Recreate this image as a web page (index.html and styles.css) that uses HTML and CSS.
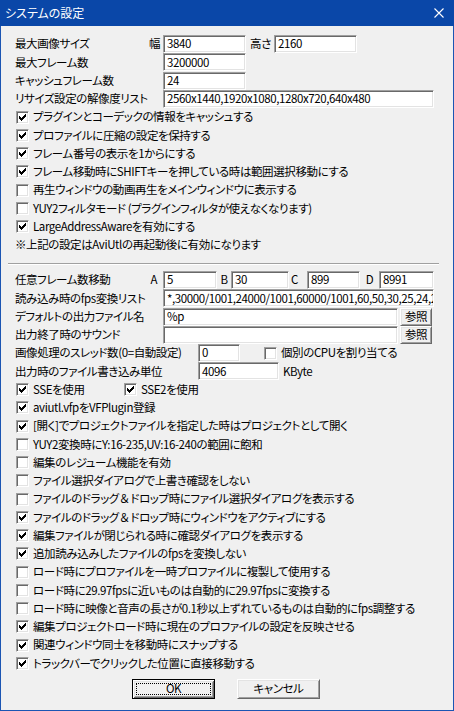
FILE: index.html
```html
<!DOCTYPE html>
<html lang="ja">
<head>
<meta charset="utf-8">
<title>システムの設定</title>
<link rel="stylesheet" href="styles.css">
</head>
<body>
<div class="window">
  <div class="titlebar">
    <span class="title">システムの設定</span>
    <span class="close"><svg width="10" height="10" viewBox="0 0 10 10"><path d="M0.5 0.5L9.5 9.5M9.5 0.5L0.5 9.5" stroke="#fff" stroke-width="1.1" fill="none"/></svg></span>
  </div>
  <div class="client">
    <div class="row"><span class="lbl">最大画像サイズ<span class="sub">幅</span></span><span class="edit w83">3840</span><span class="lbl2">高さ</span><span class="edit w83">2160</span></div>
    <div class="row"><span class="lbl">最大フレーム数</span><span class="edit w83">3200000</span></div>
    <div class="row"><span class="lbl">キャッシュフレーム数</span><span class="edit w83">24</span></div>
    <div class="row"><span class="lbl">リサイズ設定の解像度リスト</span><span class="edit wfull">2560x1440,1920x1080,1280x720,640x480</span></div>
    <div class="row cbrow"><span class="cb on"></span><span>プラグインとコーデックの情報をキャッシュする</span></div>
    <div class="row cbrow"><span class="cb on"></span><span>プロファイルに圧縮の設定を保持する</span></div>
    <div class="row cbrow"><span class="cb on"></span><span>フレーム番号の表示を1からにする</span></div>
    <div class="row cbrow"><span class="cb on"></span><span>フレーム移動時にSHIFTキーを押している時は範囲選択移動にする</span></div>
    <div class="row cbrow"><span class="cb"></span><span>再生ウィンドウの動画再生をメインウィンドウに表示する</span></div>
    <div class="row cbrow"><span class="cb"></span><span>YUY2フィルタモード (プラグインフィルタが使えなくなります)</span></div>
    <div class="row cbrow"><span class="cb on"></span><span>LargeAddressAwareを有効にする</span></div>
    <div class="row"><span>※上記の設定はAviUtlの再起動後に有効になります</span></div>

    <div class="sep"></div>

    <div class="row"><span class="lbl">任意フレーム数移動<span class="sub suba">A</span></span><span class="edit wa">5</span><span class="key keyb">B</span><span class="edit wb">30</span><span class="key keyc">C</span><span class="edit wc">899</span><span class="key keyd">D</span><span class="edit wd">8991</span></div>
    <div class="row"><span class="lbl">読み込み時のfps変換リスト</span><span class="edit wfull">*,30000/1001,24000/1001,60000/1001,60,50,30,25,24,20</span></div>
    <div class="row"><span class="lbl">デフォルトの出力ファイル名</span><span class="edit wpath">%p</span><span class="btn small">参照</span></div>
    <div class="row"><span class="lbl">出力終了時のサウンド</span><span class="edit wpath"></span><span class="btn small">参照</span></div>
    <div class="row"><span class="lbl wide">画像処理のスレッド数(0=自動設定)</span><span class="edit wthr">0</span><span class="cbitem cpu"><span class="cb"></span><span>個別のCPUを割り当てる</span></span></div>
    <div class="row"><span class="lbl wide">出力時のファイル書き込み単位</span><span class="edit wbuf">4096</span><span class="unit">KByte</span></div>
    <div class="row cbrow"><span class="cbitem sse"><span class="cb on"></span><span>SSEを使用</span></span><span class="cbitem"><span class="cb on"></span><span>SSE2を使用</span></span></div>
    <div class="row cbrow"><span class="cb on"></span><span>aviutl.vfpをVFPlugin登録</span></div>
    <div class="row cbrow"><span class="cb on"></span><span>[開く]でプロジェクトファイルを指定した時はプロジェクトとして開く</span></div>
    <div class="row cbrow"><span class="cb"></span><span>YUY2変換時にY:16-235,UV:16-240の範囲に飽和</span></div>
    <div class="row cbrow"><span class="cb"></span><span>編集のレジューム機能を有効</span></div>
    <div class="row cbrow"><span class="cb"></span><span>ファイル選択ダイアログで上書き確認をしない</span></div>
    <div class="row cbrow"><span class="cb"></span><span>ファイルのドラッグ<span class="fw">＆</span>ドロップ時にファイル選択ダイアログを表示する</span></div>
    <div class="row cbrow"><span class="cb on"></span><span>ファイルのドラッグ<span class="fw">＆</span>ドロップ時にウィンドウをアクティブにする</span></div>
    <div class="row cbrow"><span class="cb on"></span><span>編集ファイルが閉じられる時に確認ダイアログを表示する</span></div>
    <div class="row cbrow"><span class="cb on"></span><span>追加読み込みしたファイルのfpsを変換しない</span></div>
    <div class="row cbrow"><span class="cb"></span><span>ロード時にプロファイルを一時プロファイルに複製して使用する</span></div>
    <div class="row cbrow"><span class="cb"></span><span>ロード時に29.97fpsに近いものは自動的に29.97fpsに変換する</span></div>
    <div class="row cbrow"><span class="cb"></span><span>ロード時に映像と音声の長さが0.1秒以上ずれているものは自動的にfps調整する</span></div>
    <div class="row cbrow"><span class="cb on"></span><span>編集プロジェクトロード時に現在のプロファイルの設定を反映させる</span></div>
    <div class="row cbrow"><span class="cb on"></span><span>関連ウィンドウ同士を移動時にスナップする</span></div>
    <div class="row cbrow"><span class="cb on"></span><span>トラックバーでクリックした位置に直接移動する</span></div>

    <div class="buttons">
      <span class="btn big default"><span class="focus">OK</span></span>
      <span class="btn big">キャンセル</span>
    </div>
  </div>
</div>
</body>
</html>
```
FILE: styles.css
```css
* { box-sizing: border-box; }
html, body { margin: 0; padding: 0; background: #f0f0f0; }
body {
  font-family: "Noto Sans CJK JP", "Noto Sans", sans-serif;
  font-size: 11.5px;
  letter-spacing: -0.4px;
  line-height: 1;
  font-feature-settings: "palt";
  color: #000;
}
.fw { font-feature-settings: normal; letter-spacing: 0; }
.window { width: 454px; height: 711px; display: flex; flex-direction: column; overflow: hidden; }
.titlebar {
  height: 26px; flex: none; background: #0a47a8; color: #fff;
  display: flex; align-items: center; justify-content: space-between;
  padding-left: 5px; padding-right: 10px;
}
.title { font-size: 12px; letter-spacing: 0; }
.close { display: flex; align-items: center; }
.close svg { display: block; }
.client {
  flex: 1; background: #f0f0f0;
  border: 1px solid #1b55b3; border-top: 0;
  padding: 9px 0 0 14px;
}
.row { height: 18.25px; display: flex; align-items: center; white-space: nowrap; }
.lbl { width: 148px; flex: none; display: flex; justify-content: space-between; }
.lbl.wide { width: 183px; }
.sub { margin-right: 3px; }
.suba { margin-right: 6px; }
.lbl2 { margin: 0 3px 0 4px; }
.edit {
  height: 18px; flex: none; background: #fff;
  border: 1px solid; border-color: #a0a0a0 #fff #fff #a0a0a0;
  box-shadow: inset 1px 1px #696969, inset -1px -1px #e3e3e3;
  padding: 0 3px; display: flex; align-items: center;
  overflow: hidden; white-space: nowrap;
}
.w83 { width: 83px; }
.wfull { width: 271px; }
.wpath { width: 235px; }
.wa { width: 54px; }
.wb { width: 58px; }
.wc { width: 53px; }
.wd { width: 55px; }
.wthr { width: 42px; }
.wbuf { width: 81px; }
.key { flex: none; }
.keyb { width: 14px; text-align: center; }
.keyc { width: 18px; padding-left: 2px; }
.keyd { width: 19px; text-align: center; }
.unit { margin-left: 4px; }
.cbrow { padding-left: 1px; gap: 4px; }
.cb {
  position: relative; width: 13px; height: 13px; flex: none; background: #fff;
  border: 1px solid; border-color: #a0a0a0 #fff #fff #a0a0a0;
  box-shadow: inset 1px 1px #696969, inset -1px -1px #e3e3e3;
}
.cb.on::after {
  content: ""; position: absolute; left: 2px; top: 4px; width: 1px; height: 3px; background: #000;
  box-shadow: 1px 1px #000, 2px 2px #000, 3px 1px #000, 4px 0 #000, 5px -1px #000, 6px -2px #000;
}
.cbitem { display: flex; align-items: center; gap: 4px; flex: none; }
.sse { width: 104px; }
.cpu { margin-left: 24px; }
.sep {
  height: 2px; width: 431px; margin: 9px 0 6px -7px;
  border-top: 1px solid #a0a0a0; border-bottom: 1px solid #fff;
}
.btn {
  display: flex; align-items: center; justify-content: center; flex: none;
  background: #f0f0f0;
  border: 1px solid; border-color: #fff #696969 #696969 #fff;
  box-shadow: inset 1px 1px #e3e3e3, inset -1px -1px #a0a0a0;
}
.btn.small { width: 32px; height: 18px; margin-left: 2px; }
.buttons { display: flex; gap: 22px; padding-left: 117px; margin-top: 6px; }
.btn.big { width: 83px; height: 20px; }
.btn.default {
  border: 1px solid #000;
  box-shadow: inset 1px 1px #fff, inset -1px -1px #696969, inset 2px 2px #e3e3e3, inset -2px -2px #a0a0a0;
  padding: 3px;
}
.focus {
  width: 100%; height: 100%; display: flex; align-items: center; justify-content: center;
  outline: 1px dotted #000; outline-offset: -1px;
}
```
